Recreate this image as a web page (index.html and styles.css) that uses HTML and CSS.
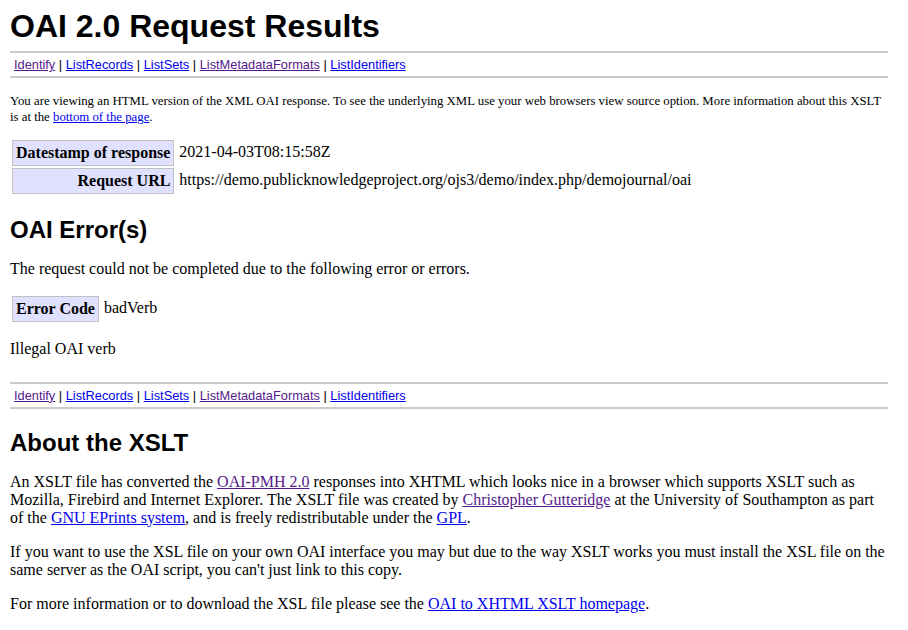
FILE: index.html
```html
<!DOCTYPE html>
<html lang="en">
<head>
  <meta charset="UTF-8">
  <title>OAI 2.0 Request Results</title>
  <link rel="stylesheet" href="styles.css">
</head>
<body class="xslt">

<h1>OAI 2.0 Request Results</h1>

<ul class="quicklinks">
  <li><a class="visited" href="#">Identify</a> | </li>
  <li><a href="#">ListRecords</a> | </li>
  <li><a href="#">ListSets</a> | </li>
  <li><a class="visited" href="#">ListMetadataFormats</a> | </li>
  <li><a href="#">ListIdentifiers</a></li>
</ul>

<p class="intro">You are viewing an HTML version of the XML OAI response. To see the underlying XML use your web browsers view source option. More information about this XSLT is at the <a href="#moreinfo">bottom of the page</a>.</p>

<table class="values">
  <tr><td class="key">Datestamp of response</td><td class="value">2021-04-03T08:15:58Z</td></tr>
  <tr><td class="key">Request URL</td><td class="value">https://demo.publicknowledgeproject.org/ojs3/demo/index.php/demojournal/oai</td></tr>
</table>

<h2>OAI Error(s)</h2>
<p>The request could not be completed due to the following error or errors.</p>
<div class="results">
  <table class="values">
    <tr><td class="key">Error Code</td><td class="value">badVerb</td></tr>
  </table>
  <p class="error">Illegal OAI verb</p>
</div>

<ul class="quicklinks">
  <li><a class="visited" href="#">Identify</a> | </li>
  <li><a href="#">ListRecords</a> | </li>
  <li><a href="#">ListSets</a> | </li>
  <li><a class="visited" href="#">ListMetadataFormats</a> | </li>
  <li><a href="#">ListIdentifiers</a></li>
</ul>

<h2 id="moreinfo">About the XSLT</h2>
<p>An XSLT file has converted the <a class="visited" href="#">OAI-PMH 2.0</a> responses into XHTML which looks nice in a browser which supports XSLT such as Mozilla, Firebird and Internet Explorer. The XSLT file was created by <a class="visited" href="#">Christopher Gutteridge</a> at the University of Southampton as part of the <a href="#">GNU EPrints system</a>, and is freely redistributable under the <a href="#">GPL</a>.</p>
<p>If you want to use the XSL file on your own OAI interface you may but due to the way XSLT works you must install the XSL file on the same server as the OAI script, you can't just link to this copy.</p>
<p>For more information or to download the XSL file please see the <a href="#">OAI to XHTML XSLT homepage</a>.</p>

</body>
</html>
```

FILE: styles.css
```css
body {
  margin: 8px 20px 8px 10px;
  font-family: "Liberation Serif", "Times New Roman", serif;
  font-size: 16px;
  line-height: 18px;
  color: #000;
  background: #fff;
}
a {
  color: #0000ee;
}
a.visited {
  color: #551a8b;
}
td.value {
  vertical-align: top;
  padding: 3px;
}
td.key {
  background-color: #e0e0ff;
  padding: 3px;
  text-align: right;
  border: 1px solid #c0c0c0;
  white-space: nowrap;
  font-weight: bold;
  vertical-align: top;
}
table.values {
  border-spacing: 2px;
}
h1, h2 {
  font-family: "Liberation Sans", Arial, sans-serif;
  clear: left;
}
h1 {
  font-size: 32px;
  line-height: 37px;
  margin-top: 0;
  padding-bottom: 4px;
  margin-bottom: 0;
}
h2 {
  font-size: 24px;
  line-height: 28px;
  margin-bottom: 0.5em;
}
.results {
  margin-bottom: 1.5em;
}
ul.quicklinks {
  margin: 2px 0 15px;
  padding: 4px;
  text-align: left;
  border-bottom: 2px solid #ccc;
  border-top: 2px solid #ccc;
  clear: left;
  font-size: 12.8px;
  line-height: 15px;
  font-family: "Liberation Sans", Arial, sans-serif;
}
ul.quicklinks li {
  display: inline;
  list-style: none;
}
p.intro {
  font-size: 80%;
  line-height: 16px;
}
```
